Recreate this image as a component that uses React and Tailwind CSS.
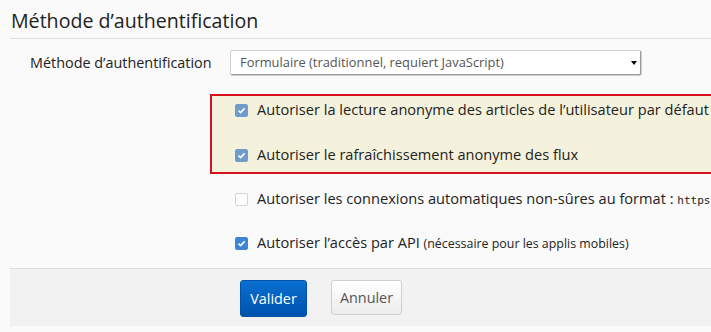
import React from "react";

const Check = ({ checked, muted }) => (
  <span
    className={
      "flex h-[13px] w-[13px] shrink-0 items-center justify-center rounded-[2px] border " +
      (checked
        ? muted
          ? "border-[#6f9ccb] bg-[#6f9ccb]"
          : "border-[#3c86d4] bg-[#3c86d4]"
        : "border-[#d4d4d4] bg-white")
    }
  >
    {checked && (
      <svg width="9" height="9" viewBox="0 0 9 9">
        <path d="M1.5 4.6 L3.6 6.6 L7.6 2.4" fill="none" stroke="white" strokeWidth="1.6" />
      </svg>
    )}
  </span>
);

export default function App() {
  return (
    <div className="h-[332px] w-[711px] overflow-hidden bg-[#fafafa] font-['Open_Sans',sans-serif] text-[#222]">
      <h1 className="pl-[11px] pt-[5px] text-[19.6px] leading-[32px] text-[#222]">
        Méthode d’authentification
      </h1>
      <div className="ml-[10px] mt-[1px] border-t border-[#dcdcdc]" />

      <div className="mt-[11px] flex items-center">
        <label className="w-[230px] pl-[30px] text-[14.4px] text-[#222]">Méthode d’authentification</label>
        <div className="relative flex h-[26px] w-[412px] items-center rounded-[2px] border border-[#cfcfcf] bg-white pl-[9px] text-[12.9px] text-[#555] shadow-[inset_-1px_-1px_0_#9a9a9a]">
          Formulaire (traditionnel, requiert JavaScript)
          <span className="absolute right-[4px] top-[10px] h-0 w-0 border-x-[3px] border-t-[4px] border-x-transparent border-t-black" />
        </div>
      </div>

      <div className="ml-[210px] mt-[18px] w-[520px] border-2 border-[#d9101e] bg-[#f4f2dc] pb-[7px] pl-[23px] pt-[4px]">
        <div className="flex h-[20px] items-center gap-[9px] text-[14.6px]">
          <Check checked muted />
          <span className="whitespace-nowrap">Autoriser la lecture anonyme des articles de l’utilisateur par défaut</span>
        </div>
        <div className="mt-[25px] flex h-[20px] items-center gap-[9px] text-[14.6px]">
          <Check checked muted />
          <span className="whitespace-nowrap">Autoriser le rafraîchissement anonyme des flux</span>
        </div>
      </div>

      <div className="ml-[235px] mt-[7px] flex h-[36px] items-center gap-[9px] text-[14.6px]">
        <Check />
        <span className="whitespace-nowrap">
          Autoriser les connexions automatiques non-sûres au format :{" "}
          <code className="font-['DejaVu_Sans_Mono',monospace] text-[11px]">https://</code>
        </span>
      </div>
      <div className="ml-[235px] mt-[8px] flex h-[36px] items-center gap-[9px] text-[14.6px]">
        <Check checked />
        <span className="whitespace-nowrap">
          Autoriser l’accès par API <span className="text-[12.4px]">(nécessaire pour les applis mobiles)</span>
        </span>
      </div>

      <div className="ml-[10px] mt-[7px] flex h-[58px] gap-[24px] border-t border-[#dedede] bg-[#f2f2f2] pl-[230px] pt-[11px]">
        <button className="h-[37px] w-[67px] rounded-[3px] border border-[#0053a8] bg-gradient-to-b from-[#0a6fd0] to-[#0052ad] text-[14.4px] text-white">
          Valider
        </button>
        <button className="h-[35px] w-[71px] rounded-[3px] border border-[#cfcfcf] bg-gradient-to-b from-white to-[#ececec] text-[14.4px] text-[#555]">
          Annuler
        </button>
      </div>
    </div>
  );
}
